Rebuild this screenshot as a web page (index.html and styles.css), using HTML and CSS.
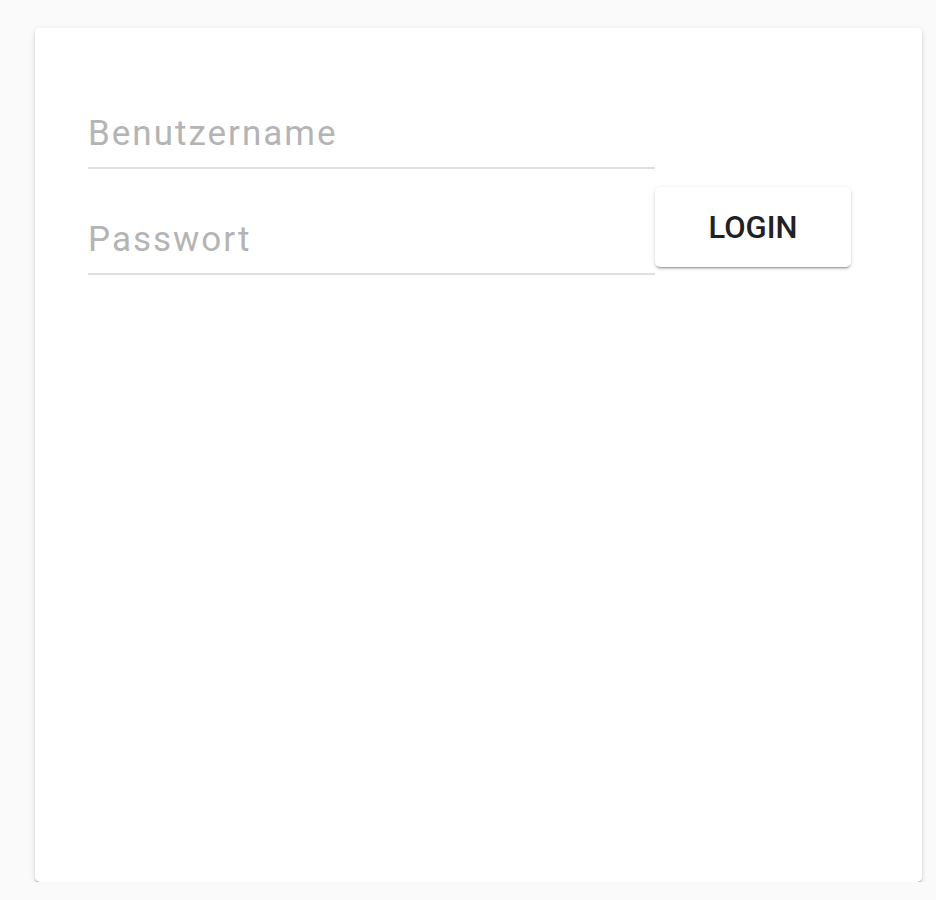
FILE: index.html
```html
<!DOCTYPE html>
<html lang="de">
<head>
<meta charset="utf-8">
<title>Login</title>
<link rel="stylesheet" href="styles.css">
</head>
<body>
<div class="card">
  <form class="login-row">
    <div class="fields">
      <label class="field"><input type="text" placeholder="Benutzername"></label>
      <label class="field"><input type="password" placeholder="Passwort"></label>
    </div>
    <button type="button" class="btn-login">LOGIN</button>
  </form>
</div>
</body>
</html>
```

FILE: styles.css
```css
html, body {
  margin: 0;
  padding: 0;
  background: #fafafa;
  font-family: Roboto, "Liberation Sans", sans-serif;
}

.card {
  box-sizing: border-box;
  margin: 28px 0 0 35px;
  width: 887px;
  height: 854px;
  background: #fff;
  border-radius: 5px;
  padding: 35px 53px;
  box-shadow: 0 3px 2px -2px rgba(0,0,0,.2), 0 2px 2px 0 rgba(0,0,0,.14), 0 2px 6px 0 rgba(0,0,0,.12);
}

.login-row {
  display: flex;
  align-items: flex-start;
}

.fields {
  width: 567px;
  display: flex;
  flex-direction: column;
}

.field {
  display: block;
  padding-top: 50px;
}

.field input {
  display: block;
  box-sizing: content-box;
  width: 100%;
  border: 0;
  border-bottom: 2px solid #e0e0e0;
  padding: 0 0 13px 0;
  margin: 0;
  outline: none;
  background: transparent;
  font-family: Roboto, "Liberation Sans", sans-serif;
  font-size: 35px;
  line-height: 41px;
  height: 41px;
  letter-spacing: 2px;
  color: #212121;
}

.field input::placeholder {
  color: #b4b4b4;
  opacity: 1;
}

.btn-login {
  margin-top: 124px;
  width: 196px;
  height: 80px;
  border: 0;
  border-radius: 5px;
  background: #fff;
  color: #212121;
  font-family: Roboto, "Liberation Sans", sans-serif;
  font-weight: 500;
  font-size: 31px;
  letter-spacing: 0;
  cursor: pointer;
  box-shadow: 0 3px 1px -2px rgba(0,0,0,.2), 0 2px 2px 0 rgba(0,0,0,.14), 0 1px 5px 0 rgba(0,0,0,.12);
}
```
